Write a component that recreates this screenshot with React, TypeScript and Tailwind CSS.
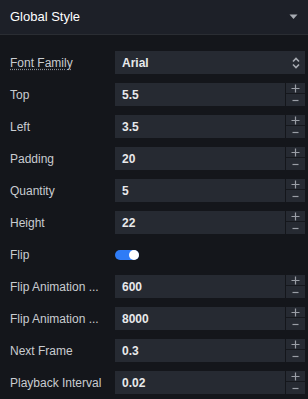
import React from "react";

const rows: { label: string; value: string }[] = [
  { label: "Top", value: "5.5" },
  { label: "Left", value: "3.5" },
  { label: "Padding", value: "20" },
  { label: "Quantity", value: "5" },
  { label: "Height", value: "22" },
];
const rows2: { label: string; value: string }[] = [
  { label: "Flip Animation ...", value: "600" },
  { label: "Flip Animation ...", value: "8000" },
  { label: "Next Frame", value: "0.3" },
  { label: "Playback Interval", value: "0.02" },
];

function NumRow({ label, value }: { label: string; value: string }) {
  return (
    <div className="flex h-[23px] items-center">
      <div className="w-[105px] shrink-0 whitespace-nowrap text-[12px] text-[#c9ccd1]">{label}</div>
      <div className="flex h-[23px] flex-1 items-center bg-[#262a32] pl-[7px] text-[12px] font-bold text-[#e8e9eb]">
        {value}
      </div>
      <div className="ml-px flex h-[23px] w-[19px] flex-col bg-[#262a32]">
        <div className="flex h-[11px] items-center justify-center border-b border-[#16181d]">
          <svg width="9" height="9" viewBox="0 0 9 9">
            <path d="M4.5 0.5v8M0.5 4.5h8" stroke="#9a9ea6" strokeWidth="1.2" />
          </svg>
        </div>
        <div className="flex flex-1 items-center justify-center">
          <svg width="7" height="3" viewBox="0 0 7 3">
            <path d="M0.5 1.5h6" stroke="#9a9ea6" strokeWidth="1.2" />
          </svg>
        </div>
      </div>
    </div>
  );
}

export default function App() {
  return (
    <div
      className="h-[399px] w-[308px] overflow-hidden bg-[#14161b]"
      style={{ fontFamily: '"Liberation Sans", Arial, sans-serif' }}
    >
      <div className="flex h-[35px] items-center justify-between border-b border-[#2a2d33] bg-[#1d2028] pl-[10px] pr-[10px]">
        <span className="text-[13px] text-white">Global Style</span>
        <svg width="9" height="6" viewBox="0 0 9 6">
          <path d="M0.5 0.5h8L4.5 5z" fill="#a7abb2" />
        </svg>
      </div>
      <div className="flex flex-col gap-[9px] pl-[10px] pr-[3px] pt-[16px]">
        <div className="flex h-[23px] items-center">
          <div className="w-[105px] shrink-0 text-[12px] text-[#c9ccd1]">
            <span className="underline decoration-dotted decoration-[#8a8e96] underline-offset-2">Font Family</span>
          </div>
          <div className="flex h-[23px] flex-1 items-center justify-between bg-[#262a32] pl-[7px] pr-[5px] text-[12px] font-bold text-[#e8e9eb]">
            <span>Arial</span>
            <svg width="8" height="12" viewBox="0 0 8 12">
              <path d="M1 4.5L4 1.5L7 4.5M1 7.5L4 10.5L7 7.5" stroke="#a7abb2" strokeWidth="1.6" fill="none" />
            </svg>
          </div>
        </div>
        {rows.map((r, i) => (
          <NumRow key={i} {...r} />
        ))}
        <div className="flex h-[23px] items-center">
          <div className="w-[105px] shrink-0 text-[12px] text-[#c9ccd1]">Flip</div>
          <div className="relative h-[10px] w-[24px] rounded-full bg-[#2f7cf6]">
            <div className="absolute right-0 top-1/2 h-[10px] w-[10px] -translate-y-1/2 rounded-full bg-white" />
          </div>
        </div>
        {rows2.map((r, i) => (
          <NumRow key={i} {...r} />
        ))}
      </div>
    </div>
  );
}
